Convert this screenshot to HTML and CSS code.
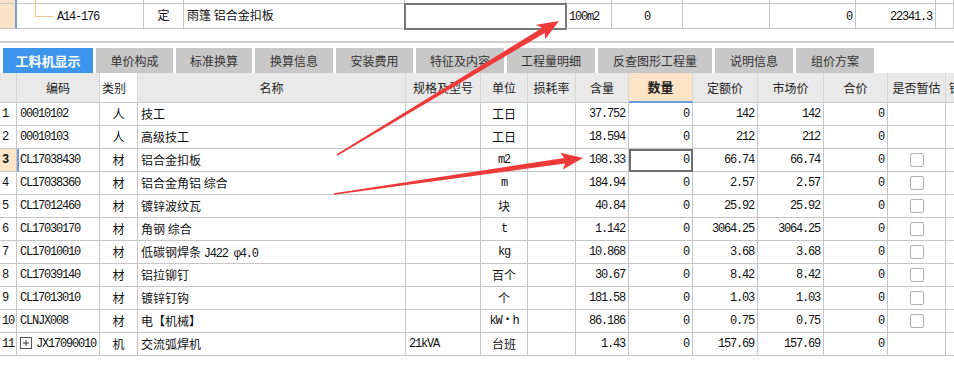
FILE: index.html
```html
<!DOCTYPE html>
<html lang="zh-CN">
<head>
    <meta charset="UTF-8">
    <title>工料机显示</title>
    <link rel="stylesheet" href="styles.css">
</head>
<body>
    <!-- parent quota row (partly scrolled off) -->
    <div class="quota prev">
        <div class="qc rh"></div><div class="qc"></div><div class="qc"></div><div class="qc"></div><div class="qc"></div><div class="qc"></div><div class="qc"></div><div class="qc"></div><div class="qc"></div><div class="qc"></div><div class="qc"></div>
    </div>
    <div class="quota">
        <div class="qc rh"></div>
        <div class="qc code tree"><span class="m">A14-176</span></div>
        <div class="qc center">定</div>
        <div class="qc">雨篷 铝合金扣板</div>
        <div class="qc editing"></div>
        <div class="qc"><span class="m">100m2</span></div>
        <div class="qc center"><span class="m">0</span></div>
        <div class="qc"></div>
        <div class="qc right"><span class="m">0</span></div>
        <div class="qc right"><span class="m">22341.3</span></div>
        <div class="qc"></div>
    </div>

    <div class="rule"></div>

    <div class="tabs">
        <div class="tab active">工料机显示</div>
        <div class="tab w77">单价构成</div>
        <div class="tab w76">标准换算</div>
        <div class="tab w78">换算信息</div>
        <div class="tab w77">安装费用</div>
        <div class="tab w88">特征及内容</div>
        <div class="tab w88">工程量明细</div>
        <div class="tab w114">反查图形工程量</div>
        <div class="tab w78">说明信息</div>
        <div class="tab w78">组价方案</div>
    </div>

    <div class="grid">
        <div class="row head">
            <div class="c"></div>
            <div class="c">编码</div>
            <div class="c sel-col">类别</div>
            <div class="c">名称</div>
            <div class="c">规格及型号</div>
            <div class="c">单位</div>
            <div class="c">损耗率</div>
            <div class="c">含量</div>
            <div class="c cur-col">数量</div>
            <div class="c">定额价</div>
            <div class="c">市场价</div>
            <div class="c">合价</div>
            <div class="c">是否暂估</div>
            <div class="c lock">锁定数量</div>
        </div>

        <div class="row">
            <div class="c no m">1</div>
            <div class="c l m">00010102</div>
            <div class="c">人</div>
            <div class="c l">技工</div>
            <div class="c"></div>
            <div class="c">工日</div>
            <div class="c"></div>
            <div class="c r m">37.752</div>
            <div class="c r m">0</div>
            <div class="c r m">142</div>
            <div class="c r m">142</div>
            <div class="c r m">0</div>
            <div class="c"></div>
            <div class="c"></div>
        </div>
        <div class="row">
            <div class="c no m">2</div>
            <div class="c l m">00010103</div>
            <div class="c">人</div>
            <div class="c l">高级技工</div>
            <div class="c"></div>
            <div class="c">工日</div>
            <div class="c"></div>
            <div class="c r m">18.594</div>
            <div class="c r m">0</div>
            <div class="c r m">212</div>
            <div class="c r m">212</div>
            <div class="c r m">0</div>
            <div class="c"></div>
            <div class="c"></div>
        </div>
        <div class="row current">
            <div class="c no m">3</div>
            <div class="c l m">CL17038430</div>
            <div class="c">材</div>
            <div class="c l">铝合金扣板</div>
            <div class="c"></div>
            <div class="c m">m2</div>
            <div class="c"></div>
            <div class="c r m">108.33</div>
            <div class="c r m focus">0</div>
            <div class="c r m">66.74</div>
            <div class="c r m">66.74</div>
            <div class="c r m">0</div>
            <div class="c"><span class="check"></span></div>
            <div class="c"></div>
        </div>
        <div class="row">
            <div class="c no m">4</div>
            <div class="c l m">CL17038360</div>
            <div class="c">材</div>
            <div class="c l">铝合金角铝 综合</div>
            <div class="c"></div>
            <div class="c m">m</div>
            <div class="c"></div>
            <div class="c r m">184.94</div>
            <div class="c r m">0</div>
            <div class="c r m">2.57</div>
            <div class="c r m">2.57</div>
            <div class="c r m">0</div>
            <div class="c"><span class="check"></span></div>
            <div class="c"></div>
        </div>
        <div class="row">
            <div class="c no m">5</div>
            <div class="c l m">CL17012460</div>
            <div class="c">材</div>
            <div class="c l">镀锌波纹瓦</div>
            <div class="c"></div>
            <div class="c">块</div>
            <div class="c"></div>
            <div class="c r m">40.84</div>
            <div class="c r m">0</div>
            <div class="c r m">25.92</div>
            <div class="c r m">25.92</div>
            <div class="c r m">0</div>
            <div class="c"><span class="check"></span></div>
            <div class="c"></div>
        </div>
        <div class="row">
            <div class="c no m">6</div>
            <div class="c l m">CL17030170</div>
            <div class="c">材</div>
            <div class="c l">角钢 综合</div>
            <div class="c"></div>
            <div class="c m">t</div>
            <div class="c"></div>
            <div class="c r m">1.142</div>
            <div class="c r m">0</div>
            <div class="c r m">3064.25</div>
            <div class="c r m">3064.25</div>
            <div class="c r m">0</div>
            <div class="c"><span class="check"></span></div>
            <div class="c"></div>
        </div>
        <div class="row">
            <div class="c no m">7</div>
            <div class="c l m">CL17010010</div>
            <div class="c">材</div>
            <div class="c l">低碳钢焊条 <span class="m">J422 φ4.0</span></div>
            <div class="c"></div>
            <div class="c m">kg</div>
            <div class="c"></div>
            <div class="c r m">10.868</div>
            <div class="c r m">0</div>
            <div class="c r m">3.68</div>
            <div class="c r m">3.68</div>
            <div class="c r m">0</div>
            <div class="c"><span class="check"></span></div>
            <div class="c"></div>
        </div>
        <div class="row">
            <div class="c no m">8</div>
            <div class="c l m">CL17039140</div>
            <div class="c">材</div>
            <div class="c l">铝拉铆钉</div>
            <div class="c"></div>
            <div class="c">百个</div>
            <div class="c"></div>
            <div class="c r m">30.67</div>
            <div class="c r m">0</div>
            <div class="c r m">8.42</div>
            <div class="c r m">8.42</div>
            <div class="c r m">0</div>
            <div class="c"><span class="check"></span></div>
            <div class="c"></div>
        </div>
        <div class="row">
            <div class="c no m">9</div>
            <div class="c l m">CL17013010</div>
            <div class="c">材</div>
            <div class="c l">镀锌钉钩</div>
            <div class="c"></div>
            <div class="c">个</div>
            <div class="c"></div>
            <div class="c r m">181.58</div>
            <div class="c r m">0</div>
            <div class="c r m">1.03</div>
            <div class="c r m">1.03</div>
            <div class="c r m">0</div>
            <div class="c"><span class="check"></span></div>
            <div class="c"></div>
        </div>
        <div class="row">
            <div class="c no m">10</div>
            <div class="c l m">CLNJX008</div>
            <div class="c">材</div>
            <div class="c l">电【机械】</div>
            <div class="c"></div>
            <div class="c m">kW・h</div>
            <div class="c"></div>
            <div class="c r m">86.186</div>
            <div class="c r m">0</div>
            <div class="c r m">0.75</div>
            <div class="c r m">0.75</div>
            <div class="c r m">0</div>
            <div class="c"><span class="check"></span></div>
            <div class="c"></div>
        </div>
        <div class="row">
            <div class="c no m">11</div>
            <div class="c l m"><svg class="expand" width="12" height="12" viewBox="0 0 12 12"><rect x="0.5" y="0.5" width="11" height="11" fill="#fff" stroke="#555"/><path d="M3 6h6M6 3v6" stroke="#333" stroke-width="1"/></svg>JX17090010</div>
            <div class="c">机</div>
            <div class="c l">交流弧焊机</div>
            <div class="c l m">21kVA</div>
            <div class="c">台班</div>
            <div class="c"></div>
            <div class="c r m">1.43</div>
            <div class="c r m">0</div>
            <div class="c r m">157.69</div>
            <div class="c r m">157.69</div>
            <div class="c r m">0</div>
            <div class="c"></div>
            <div class="c"></div>
        </div>
    </div>

    <!-- red annotation arrows drawn over the screenshot -->
    <svg class="marks" width="954" height="369" viewBox="0 0 954 369">
        <g fill="#ef3a3a">
            <g transform="translate(337 155) rotate(-31.1)">
                <polygon points="0,-0.8 241,-2.8 238,-8.5 259.3,0 238,8.5 241,2.8 0,0.8"/>
            </g>
            <g transform="translate(334 194) rotate(-8.2)">
                <polygon points="0,-0.8 233,-2.8 230,-8.5 251.6,0 230,8.5 233,2.8 0,0.8"/>
            </g>
        </g>
    </svg>
</body>
</html>
```

FILE: styles.css
```css
* {
    margin: 0;
    padding: 0;
    box-sizing: border-box;
}

body {
    position: relative;
    width: 954px;
    height: 369px;
    overflow: hidden;
    background: #fff;
    color: #111;
    font-family: "Noto Sans CJK SC", sans-serif;
    font-size: 12px;
}

/* ascii text in the grid: narrow fixed-width like SimSun */
.m {
    font-family: "Liberation Mono", "Noto Sans CJK SC", monospace;
    letter-spacing: -1.2px;
}

/* quota row at the top */
.quota {
    display: grid;
    grid-template-columns: 17px 127px 40px 221px 161px 46px 71px 87px 86px 80px 1fr;
    height: 23px;
    line-height: 22px;
}

.quota.prev {
    height: 4px;
}

.qc {
    border-right: 1px solid #c6c6c6;
    border-bottom: 1px solid #c6c6c6;
    padding: 0 3px;
    white-space: nowrap;
}

.qc.rh {
    background: #fbe3c7;
    border-right: 2px solid #7d9bd6;
}

.qc.code {
    position: relative;
    padding-left: 40px;
}

.qc.tree::before {
    content: "";
    position: absolute;
    left: 18px;
    top: -4px;
    width: 17px;
    height: 16px;
    border-left: 1px solid #edc58f;
    border-bottom: 1px solid #edc58f;
}

.qc.center {
    text-align: center;
}

.qc.right {
    text-align: right;
}

.qc.editing {
    outline: 2px solid #777;
    outline-offset: -1px;
}

.rule {
    height: 2px;
    margin-top: 14px;
    background: #cfcfcf;
}

/* tab strip */
.tabs {
    display: flex;
    gap: 3px;
    padding: 5px 0 0 3px;
}

.tab {
    width: 90px;
    height: 25px;
    line-height: 25px;
    text-align: center;
    background: #c8c8c8;
    color: #333;
    font-size: 12px;
}

.tab.active {
    background: #3d95ee;
    color: #fff;
    font-size: 13px;
    font-weight: bold;
}

.tab.w76 { width: 76px; }
.tab.w77 { width: 77px; }
.tab.w78 { width: 78px; }
.tab.w88 { width: 88px; }
.tab.w114 { width: 114px; }

/* material grid */
.row {
    display: grid;
    grid-template-columns: 17px 83px 38px 268px 75px 47px 48px 53px 64px 65px 66px 64px 58px 60px;
    height: 23px;
    line-height: 22px;
}

.c {
    border-right: 1px solid #c6c6c6;
    border-bottom: 1px solid #c6c6c6;
    text-align: center;
    white-space: nowrap;
    overflow: hidden;
}

.c.l {
    text-align: left;
    padding-left: 3px;
}

.c.r {
    text-align: right;
    padding-right: 3px;
}

.c.no {
    text-align: left;
    padding-left: 2px;
}

.row.head {
    height: 30px;
    line-height: 29px;
    background: #e9e9e9;
    color: #222;
}

.row.head .c {
    border-right-color: #d6d6d6;
    border-bottom-color: #c6c6c6;
}

.row.head .sel-col {
    background: #fff;
    text-align: left;
    padding-left: 2px;
}

.row.head .cur-col {
    background: #fde4c6;
    font-weight: bold;
    font-size: 13px;
    border-bottom: 2px solid #6d9be0;
    line-height: 28px;
}

.row.head .lock {
    text-align: left;
    padding-left: 3px;
}

.row.current .no {
    background: #fde4c6;
    font-weight: bold;
}

.row.current .no + .c {
    border-left: 2px solid #7d9bd6;
    padding-left: 1px;
}

.c.focus {
    outline: 2px solid #6e6e6e;
    outline-offset: -2px;
}

.check {
    display: inline-block;
    width: 14px;
    height: 14px;
    margin-top: 4px;
    vertical-align: top;
    border: 1px solid #b0b0b0;
    border-radius: 2px;
    background: #fff;
}

.expand {
    vertical-align: -2px;
    margin-right: 4px;
}

.marks {
    position: absolute;
    left: 0;
    top: 0;
    pointer-events: none;
}
```
